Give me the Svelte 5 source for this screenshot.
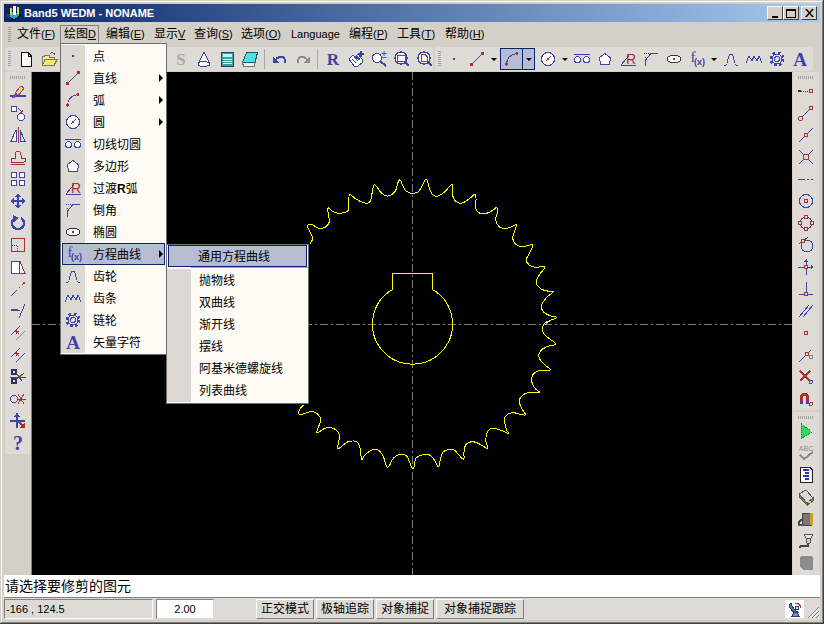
<script lang="ts">
  const B = '#3c46a8', R = '#a83232', G = '#8c8c8c';
  const ln = (a, b, c, d, col = B, w = 1) => `<line x1="${a}" y1="${b}" x2="${c}" y2="${d}" stroke="${col}" stroke-width="${w}"/>`;
  const dot = (x, y, r = 1.5, c = R) => `<circle cx="${x}" cy="${y}" r="${r}" fill="${c}"/>`;
  const ring = (x, y, r = 2, c = R) => `<circle cx="${x}" cy="${y}" r="${r}" fill="#dedbd6" stroke="${c}"/>`;
  const stroke = (d, c = B, w = 1) => `<path d="${d}" fill="none" stroke="${c}" stroke-width="${w}"/>`;
  const shape = (d, f, c = B) => `<path d="${d}" fill="${f}" stroke="${c}"/>`;
  const letter = (t, x, y, s, c, weight = 'bold', fam = 'Liberation Serif, serif') => `<text x="${x}" y="${y}" font-size="${s}" fill="${c}" text-anchor="middle" font-family="${fam}" font-weight="${weight}">${t}</text>`;
  const gearIcon = `<circle cx="8" cy="8" r="6" fill="none" stroke="${B}" stroke-width="3" stroke-dasharray="2.4 2.3"/><circle cx="8" cy="8" r="5" fill="#dedbd6" stroke="${B}"/><circle cx="8" cy="8" r="2.5" fill="none" stroke="${B}"/>`;

  const icons = {
    new: shape('M3.5 1.5H10L13.5 5V15.5H3.5Z', '#fff', '#111') + stroke('M10 1.5V5H13.5', '#111'),
    open: shape('M1.5 14.5V5.5H3L4 4.5H8V6.5H13V8', '#f4ec8c', '#777') + shape('M1.5 14.5L4 8.5H16L13 14.5Z', '#f4e870', '#887744') + stroke('M9 3Q12 0 14 4', '#555'),
    s: letter('S', 8, 14, 17, '#a8a8a8'),
    cone: shape('M8 1L2 13A6 2.5 0 0 0 14 13Z', '#fff') + stroke('M2 13A6 2.5 0 0 1 14 13'),
    calc: shape('M2.5 1.5H14.5V15.5H2.5Z', '#3f9f9f', '#303c90') + '<rect x="4" y="3" width="9" height="3" fill="#c8f0f0"/><rect x="4" y="8" width="9" height="1" fill="#e8f8f8"/><rect x="4" y="10" width="9" height="1" fill="#e8f8f8"/><rect x="4" y="12" width="9" height="1" fill="#e8f8f8"/>',
    eraser: shape('M4.5 1.5H15.5L13 11.5H0.5Z', '#50e0e8', '#2f5560') + shape('M0.5 11.5L1.5 15.5H12.5L13 11.5', '#eee', '#777'),
    undo: stroke('M4 8Q9 4 12 7Q14 10 12 12', B, 2) + `<path d="M1 5L7 12L1 12Z" fill="${B}"/>`,
    redo: stroke('M12 8Q7 4 4 7Q2 10 4 12', G, 2) + `<path d="M15 5L9 12L15 12Z" fill="${G}"/>`,
    r: letter('R', 8, 14, 17, B),
    hand: shape('M1 8L5 4L11 9L8 5L10 3L14 8V12L10 15H6Z', '#fff') + stroke('M4 8L8 12M6 6L10 10M9 5L12 9') + stroke('M10 3H16M13 0V6', B, 1.5),
    zoompm: `<circle cx="6" cy="7" r="4.5" fill="#fff" stroke="${B}" stroke-width="1.4"/>` + ln(9.5, 10.5, 15, 15, B, 2) + `<text x="13" y="7" font-size="10" text-anchor="middle" fill="${B}" font-family="Liberation Sans, sans-serif">±</text>`,
    zoomwin: `<circle cx="7" cy="7" r="6" fill="#fff" stroke="${B}" stroke-width="1.4"/><rect x="3.5" y="4.5" width="8" height="6" fill="none" stroke="${R}"/>` + ln(11, 11, 15, 15, B, 2),
    zoomdoc: `<circle cx="7" cy="7" r="6" fill="#fff" stroke="${B}" stroke-width="1.4"/>` + shape('M4.5 3.5H8L10 5.5V10.5H4.5Z', '#fff', R) + ln(11, 11, 15, 15, B, 2),
    point: dot(8, 8, 1.3, '#903040'),
    line: ln(2, 14, 14, 2) + dot(2.5, 13.5) + dot(13.5, 2.5),
    arc: stroke('M2.5 13Q3 4 13 2.5') + dot(2.5, 13, 1.8) + dot(13, 2.5),
    circle: `<circle cx="8" cy="8" r="6.5" fill="#fff" stroke="${B}"/>` + ln(6, 10, 11, 5, R) + dot(8, 8, 1),
    oo: ln(0, 3.5, 16, 3.5) + `<circle cx="3.5" cy="8.5" r="3" fill="#fff" stroke="${B}"/><circle cx="12.5" cy="8.5" r="3" fill="#fff" stroke="${B}"/>`,
    poly: shape('M8 2.5L14 7L12 13.5H4L2 7Z', '#fff'),
    fillet: stroke('M0.5 14.5L9 4.5M0.5 14.5H15.5') + letter('R', 11, 13, 14, R, 'normal', 'Liberation Sans, sans-serif'),
    chamfer: stroke('M2.5 15V9L8 2.5H15') + `<path d="M1 2.5H7M1.5 6H4" stroke="${B}" stroke-dasharray="1 1"/>`,
    ellipse: `<ellipse cx="8" cy="8" rx="7" ry="3.7" fill="#fff" stroke="#333"/>` + dot(8, 8, 1),
    fx: letter('f', 4, 11, 15, B, 'normal') + letter('(x)', 10.5, 14, 9, B, 'bold', 'Liberation Sans, sans-serif'),
    tooth: stroke('M1 14H3C5 14 4.500 3 8 3C11.500 3 11 14 13 14H15'),
    rack: stroke('M0 12L3 5L6 10L8 5L11 10L13 5L16 12'),
    gear: gearIcon,
    a: letter('A', 8, 15, 19, B),

    erase: `<path d="M5 10L11 3L14 5L9 12Z" fill="#e8dc50" stroke="#a040a0"/>` + ln(0, 13, 16, 13, B, 1.5) + ln(3, 15, 6, 11, '#a040a0', 2),
    movecopy: `<circle cx="4" cy="4" r="3" fill="#fff" stroke="${B}"/><circle cx="11" cy="12" r="3.500" fill="#fff" stroke="${B}"/>` + ln(8, 3, 12, 7, B) + ln(10, 7, 12, 7, R) + ln(12, 5, 12, 7, R),
    mirror: ln(8, 0, 8, 16, R) + shape('M6 3V14H1Z', '#fff') + shape('M10 3V14H15Z', '#dedbd6'),
    cloud: shape('M1.500 13V9H5V6Q5 2 8 2Q11 2 11 6V9H14C16 9 16 13 14 13Z', '#dedbd6', R) + ln(1, 15, 15, 15, R),
    array: '<g fill="#fff" stroke="' + B + '"><rect x="1.500" y="1.500" width="5" height="5"/><rect x="9.500" y="1.500" width="5" height="5"/><rect x="1.500" y="9.500" width="5" height="5"/><rect x="9.500" y="9.500" width="5" height="5"/></g>',
    move: ln(8, 1, 8, 15, B, 2) + ln(1, 8, 15, 8, B, 2) + `<path d="M8 0L11 4H5ZM8 16L11 12H5ZM0 8L4 5V11ZM16 8L12 5V11Z" fill="${B}"/>`,
    rotate: `<path d="M5 3A6 6 0 1 0 11 3" fill="none" stroke="${B}" stroke-width="2.500"/><path d="M3 0L9 3L4 7Z" fill="${B}"/>`,
    scale: shape('M1.500 1.500H14.500V14.500H1.500Z', 'none', R) + `<rect x="1.500" y="8.500" width="6" height="6" fill="none" stroke="${B}" stroke-dasharray="1 1"/>`,
    shear: shape('M1.500 2.500H10L15 14.500H1.500Z', '#fff', R) + shape('M1.500 2.500H9.500V14.500H1.500Z', 'none', B),
    extend: ln(1, 15, 6, 10) + `<line x1="6" y1="10" x2="14" y2="2" stroke="${R}" stroke-dasharray="2 2"/>` + dot(14, 2),
    trim: ln(1, 7, 8, 7, B, 2) + `<line x1="8" y1="7" x2="11" y2="7" stroke="${R}" stroke-dasharray="2 1"/>` + ln(9, 15, 15, 1),
    offset1: ln(1, 10, 10, 1) + ln(6, 15, 15, 6, G) + stroke('M5 5L9 9', R) + `<path d="M5 5L9 6L6 9Z" fill="${R}"/>`,
    offset2: ln(1, 10, 10, 1) + ln(6, 15, 15, 6) + stroke('M5 5L9 9', R) + `<path d="M5 5L9 6L6 9Z" fill="${R}"/>`,
    scissors: `<circle cx="4" cy="3" r="2.500" fill="none" stroke="#333060" stroke-width="2"/><circle cx="4" cy="12" r="2.500" fill="none" stroke="#333060" stroke-width="2"/>` + ln(6, 4, 12, 12, '#555') + ln(6, 11, 14, 4, R) + ln(0, 8, 16, 8, B),
    break: `<circle cx="4" cy="8" r="3.500" fill="none" stroke="${B}"/>` + ln(7, 8, 16, 8, B) + ln(8, 3, 14, 13, R) + ln(14, 3, 8, 13, R),
    stretch: ln(7, 0, 7, 15, B, 1.500) + ln(0, 8, 15, 8, B, 1.500) + `<path d="M7 0L10 4H4Z" fill="${B}"/>` + `<path d="M15 15L9 15L15 9Z" fill="${R}"/>` + ln(9, 9, 13, 13, R, 2),
    help: letter('?', 8, 15, 20, B),

    snapend: ln(0, 8, 3, 8, '#333', 1.500) + `<line x1="3" y1="8" x2="11" y2="8" stroke="#333" stroke-dasharray="1 1"/>` + ring(13, 8, 2),
    snapline: ln(3, 13, 13, 3) + ring(2.500, 13.500) + ring(13, 3),
    snapmid: ln(1, 15, 15, 1) + ring(8, 8),
    snapx: ln(1, 1, 15, 15) + ln(15, 1, 1, 15) + `<rect x="5.500" y="5.500" width="5" height="5" fill="#dedbd6" stroke="${R}"/>`,
    dash: ln(0, 8, 7, 8) + ln(9, 8, 11, 8) + ln(13, 8, 15, 8),
    snapcenter: `<circle cx="8" cy="8" r="6.500" fill="none" stroke="${B}"/>` + ring(8, 8),
    snapquad: `<circle cx="8" cy="8" r="6" fill="none" stroke="${B}"/>` + ring(8, 2) + ring(2, 8) + ring(14, 8) + ring(8, 14),
    snaptan: `<circle cx="9" cy="9" r="6" fill="none" stroke="${B}"/>` + ln(1, 7, 10, 0) + ring(5, 4),
    snapcross: ln(8, 0, 8, 16) + ln(0, 8, 15, 8) + ring(8, 8) + `<path d="M8 0L10 3H6ZM16 8L13 10V6Z" fill="${B}"/>`,
    snapperp: ln(8, 1, 8, 13) + ln(1, 13, 15, 13) + ring(8, 13),
    parallel: ln(1, 14, 11, 2) + ln(5, 14, 15, 2),
    snapnode: ring(8, 8),
    nearest: ln(1, 15, 13, 3) + ring(9, 7) + ring(13, 10, 2, '#888'),
    cancel: ln(2, 2, 12, 12, R, 2.500) + ln(12, 2, 2, 12, R, 2.500) + ring(13, 13, 1.500, B),
    magnet: `<path d="M2 12V6A4.500 4.500 0 0 1 11 6V12H8V6A1.500 1.500 0 0 0 5 6V12Z" fill="${R}"/><rect x="2" y="10" width="3" height="3" fill="${B}"/><rect x="8" y="10" width="3" height="3" fill="${B}"/>` + ring(13, 13, 1.500),
    play: '<path d="M3 0.500L14 9L3 15.500Z" fill="#30d860" stroke="#208030" stroke-dasharray="1 1"/>',
    abc: `<text x="8" y="6" font-size="7" fill="${G}" text-anchor="middle" font-family="Liberation Sans, sans-serif">ABC</text>` + stroke('M2 10L6 14L15 7', G, 2),
    doc: '<path d="M2.500 0.500H12L14.500 3V15.500H2.500Z" fill="#fff" stroke="#222"/>' + ln(5, 3, 11, 3, '#2a36b0', 2) + ln(7, 6, 11, 6, '#2a36b0', 2) + ln(5, 9, 11, 9, '#2a36b0', 2) + ln(7, 12, 11, 12, '#2a36b0', 2),
    printer: '<path d="M1 5L8 1L15 9L9 14Z" fill="#dcdcdc" stroke="#555"/><path d="M1 5V8L9 16V14Z" fill="#888" stroke="#555"/><path d="M9 14L15 9V12L9 16Z" fill="#4aa" stroke="#555"/><rect x="10" y="12" width="3" height="2" fill="#e0d040"/>',
    plotter: '<rect x="4" y="2" width="9" height="12" fill="#777" stroke="#444"/><rect x="12" y="2" width="3" height="12" fill="#c8a030"/><path d="M1 14Q0 9 5 9" fill="none" stroke="#444" stroke-width="2"/><rect x="0" y="13" width="7" height="2" fill="#555"/>',
    cable: '<path d="M6 1H15L13 5H8Z" fill="#e8e8d8" stroke="#555"/><path d="M8 5H13L12 10H9Z" fill="#ccc" stroke="#555"/>' + stroke('M10 10V13H3L1 15', '#444', 1.500),
    block: '<path d="M3 1H13L15 3V15H5L2 12V2Z" fill="#8c8c8c"/>'
  };

  const menus = [
    { zh: '文件', l: '(', u: 'F', r: ')', w: 44 },
    { zh: '绘图', l: '', u: 'D', r: '', w: 39, open: true },
    { zh: '编辑', l: '(', u: 'E', r: ')', w: 48 },
    { zh: '显示', l: '', u: 'V', r: '', w: 40 },
    { zh: '查询', l: '(', u: 'S', r: ')', w: 47 },
    { zh: '选项', l: '(', u: 'O', r: ')', w: 50 },
    { zh: '', l: 'Language', u: '', r: '', w: 58 },
    { zh: '编程', l: '(', u: 'P', r: ')', w: 48 },
    { zh: '工具', l: '(', u: 'T', r: ')', w: 48 },
    { zh: '帮助', l: '(', u: 'H', r: ')', w: 48 }
  ];

  const draw = [
    { icon: 'point', label: '点' },
    { icon: 'line', label: '直线', sub: true },
    { icon: 'arc', label: '弧', sub: true },
    { icon: 'circle', label: '圆', sub: true },
    { icon: 'oo', label: '切线切圆' },
    { icon: 'poly', label: '多边形' },
    { icon: 'fillet', label: '过渡', bold: 'R', tail: '弧' },
    { icon: 'chamfer', label: '倒角' },
    { icon: 'ellipse', label: '椭圆' },
    { icon: 'fx', label: '方程曲线', sub: true, active: true },
    { icon: 'tooth', label: '齿轮' },
    { icon: 'rack', label: '齿条' },
    { icon: 'gear', label: '链轮' },
    { icon: 'a', label: '矢量字符' }
  ];
  const curves = ['抛物线', '双曲线', '渐开线', '摆线', '阿基米德螺旋线', '列表曲线'];

  const leftTools = ['erase', 'movecopy', 'mirror', 'cloud', 'array', 'move', 'rotate', 'scale', 'shear', 'extend', 'trim', 'offset1', 'offset2', 'scissors', 'break', 'stretch', 'help'];
  const snapTools = ['snapend', 'snapline', 'snapmid', 'snapx', 'dash', 'snapcenter', 'snapquad', 'snaptan', 'snapcross', 'snapperp', 'parallel', 'snapnode', 'nearest', 'cancel', 'magnet'];
  const runTools = ['play', 'abc', 'doc', 'printer', 'plotter', 'cable', 'block'];
  const modes = [{ t: '正交模式', w: 58 }, { t: '极轴追踪', w: 58 }, { t: '对象捕捉', w: 58 }, { t: '对象捕捉跟踪', w: 88 }];

  // gear outline traced clockwise from the top root, in page pixels
  const top = [[367,72],[385,65],[395,50],[405,30],[412,32],[420,60],[430,76],[445,78],[465,65],[483,45],[488,50],[490,85],[505,98],[520,98],[540,85],[555,72],[558,85],[558,118],[570,130],[590,130],[610,120],[620,112],[623,125],[617,150],[630,172],[650,175],[665,170],[680,163],[675,180],[668,205],[680,225],[700,230],[728,224],[718,250],[708,270],[718,285],[735,292],[765,290],[750,312],[738,335],[745,350],[765,362],[790,365],[770,382],[755,405],[760,425],[780,437],[800,442],[780,452],[765,465]];
  const bottom = [[775,3],[760,15],[758,35],[770,50],[797,72],[770,80],[750,95],[748,115],[765,135],[781,150],[745,152],[728,165],[725,185],[735,205],[748,218],[715,218],[695,228],[688,245],[695,265],[705,285],[670,278],[650,285],[643,300],[650,330],[655,340],[630,330],[605,325],[590,340],[588,365],[592,385],[565,370],[545,365],[527,375],[522,395],[520,418],[495,392],[480,388],[460,395],[452,415],[445,440],[430,415],[415,403],[395,405],[378,415],[372,440],[367,445],[358,425],[350,408],[330,403],[310,415],[298,437],[290,440],[280,410],[265,390],[245,390],[225,405],[215,418],[210,385],[200,365],[175,365],[160,375],[143,385],[148,345],[130,325],[105,325],[80,338],[92,300],[80,280],[60,275],[30,285],[28,270],[40,255]];
  const rest = [[60,222],[68,205],[60,185],[52,168],[65,163],[85,175],[105,172],[118,155],[113,115],[130,125],[150,130],[175,120],[178,75],[195,85],[220,98],[240,95],[250,50],[258,48],[275,70],[295,78],[315,65],[325,35],[332,32],[345,60],[367,72]];

  // catmull-rom through the traced points
  function spline(pts) {
    let d = `M${pts[0][0]} ${pts[0][1]}`;
    for (let i = 0; i < pts.length - 1; i++) {
      const p0 = pts[Math.max(i - 1, 0)], p1 = pts[i], p2 = pts[i + 1], p3 = pts[Math.min(i + 2, pts.length - 1)];
      const c1 = [p1[0] + (p2[0] - p0[0]) / 6, p1[1] + (p2[1] - p0[1]) / 6];
      const c2 = [p2[0] - (p3[0] - p1[0]) / 6, p2[1] - (p3[1] - p1[1]) / 6];
      d += `C${c1[0].toFixed(1)} ${c1[1].toFixed(1)} ${c2[0].toFixed(1)} ${c2[1].toFixed(1)} ${p2[0].toFixed(1)} ${p2[1].toFixed(1)}`;
    }
    return d;
  }
  // the stretch behind the submenu is left out, so the two runs stay apart
  const outline = spline([
    ...top.map(([x, y]) => [290 + x / 3, 170 + y / 3]),
    ...bottom.map(([x, y]) => [290 + x / 3, 320 + y / 3])
  ]) + spline(rest.map(([x, y]) => [290 + x / 3, 170 + y / 3]));
</script>

{#snippet icon(name)}
  <svg class="ico" width="16" height="16" viewBox="0 0 16 16" shape-rendering="crispEdges">{@html icons[name]}</svg>
{/snippet}

{#snippet tool(name)}
  <span class="tool">{@render icon(name)}</span>
{/snippet}

{#snippet drop()}
  <span class="drop"><i></i></span>
{/snippet}

<div class="window">
  <header class="title">
    <svg class="appicon" width="16" height="16" viewBox="0 0 16 16" shape-rendering="crispEdges">
      <path d="M1 10L8 6L15 10L8 15Z" fill="#20b0c0" stroke="#000" />
      <rect x="4" y="3" width="2" height="7" fill="#e8d040" />
      <rect x="7" y="1" width="3" height="9" fill="#fff" />
      <rect x="11" y="2" width="2" height="7" fill="#e8d040" />
      <rect x="1" y="9" width="3" height="3" fill="#602080" />
    </svg>
    <span class="name">Band5 WEDM - NONAME</span>
    <div class="caption">
      <button aria-label="minimize"><svg width="9" height="9" viewBox="0 0 9 9"><rect x="1" y="7" width="6" height="2" /></svg></button>
      <button aria-label="maximize"><svg width="10" height="9" viewBox="0 0 10 9"><path d="M0 0H10V9H0ZM1 2V8H9V2Z" fill-rule="evenodd" /></svg></button>
      <button class="close" aria-label="close"><svg width="9" height="8" viewBox="0 0 9 8"><path d="M0 0H2L4.500 3L7 0H9L5.500 4L9 8H7L4.500 5L2 8H0L3.500 4Z" /></svg></button>
    </div>
  </header>

  <nav class="menubar">
    <span class="grip-v"></span>
    {#each menus as m}
      <span class="menu" class:open={m.open} style="width:{m.w}px"><span class="zh">{m.zh}</span>{m.l}{#if m.u}<u>{m.u}</u>{/if}{m.r}</span>
    {/each}
  </nav>

  <div class="toolrow">
    <div class="band one">
      <span class="grip-v"></span>
      {@render tool('new')}
      {@render tool('open')}
      <span class="hidden-tools"></span>
      {@render tool('s')}
      {@render tool('cone')}
      {@render tool('calc')}
      {@render tool('eraser')}
      <span class="sep"></span>
      {@render tool('undo')}
      {@render tool('redo')}
      <span class="sep"></span>
      {@render tool('r')}
      {@render tool('hand')}
      {@render tool('zoompm')}
      {@render tool('zoomwin')}
      {@render tool('zoomdoc')}
    </div>
    <div class="band two">
      <span class="grip-v"></span>
      {@render tool('point')}
      {@render tool('line')}
      {@render drop()}
      <span class="selected">
        <span class="tool narrow">{@render icon('arc')}</span>
        <span class="drop"><i></i></span>
      </span>
      {@render tool('circle')}
      {@render drop()}
      {@render tool('oo')}
      {@render tool('poly')}
      {@render tool('fillet')}
      {@render tool('chamfer')}
      {@render tool('ellipse')}
      {@render tool('fx')}
      {@render drop()}
      {@render tool('tooth')}
      {@render tool('rack')}
      {@render tool('gear')}
      {@render tool('a')}
    </div>
  </div>

  <main class="work">
    <aside class="dock left">
      <div class="vbar">
        <span class="grip-h"></span>
        {#each leftTools as t}{@render tool(t)}{/each}
      </div>
    </aside>

    <svg class="canvas" width="760" height="503" viewBox="32 72 760 503" shape-rendering="crispEdges">
      <line x1="32" y1="324.500" x2="792" y2="324.500" stroke="#808080" stroke-dasharray="8 3 2 3" />
      <line x1="412.500" y1="72" x2="412.500" y2="575" stroke="#808080" stroke-dasharray="8 3 2 3" />
      <path d={outline} fill="none" stroke="#ffff00" />
      <path d="M392.500 289.500V273.500H432.500V289.500A40 40 0 1 1 392.500 289.500Z" fill="none" stroke="#ffff00" />
    </svg>

    <aside class="dock right">
      <div class="vbar">
        <span class="grip-h"></span>
        {#each snapTools as t}{@render tool(t)}{/each}
      </div>
      <div class="vbar second">
        <span class="grip-h"></span>
        {#each runTools as t}{@render tool(t)}{/each}
      </div>
    </aside>
  </main>

  <div class="prompt">请选择要修剪的图元</div>

  <footer class="status">
    <span class="coords">-166 , 124.5</span>
    <span class="scale">2.00</span>
    <div class="modes">
      {#each modes as m}
        <span class="mode" style="width:{m.w}px">{m.t}</span>
      {/each}
    </div>
    <span class="dish">
      <svg width="16" height="16" viewBox="0 0 16 16" shape-rendering="crispEdges">
        <path d="M2 4Q4 12 12 12Q6 9 4 2Z" fill="#5a76b8" stroke="#2a3a70" />
        <path d="M7 11L5 15H12L10 11Z" fill="#7a8ab8" stroke="#2a3a70" />
        <path d="M8 2Q13 2 14 7" fill="none" stroke="#c03030" />
        <rect x="8" y="5" width="3" height="3" fill="#e8e8e8" stroke="#2a3a70" />
      </svg>
    </span>
    <svg class="sizer" width="13" height="13" viewBox="0 0 13 13">
      <path d="M12 1L1 12M12 5L5 12M12 9L9 12" stroke="#808080" fill="none" />
      <path d="M12 2.500L2.500 12M12 6.500L6.500 12M12 10.500L10.500 12" stroke="#fff" fill="none" />
    </svg>
  </footer>

  <div class="popup draw">
    {#each draw as item}
      <div class="row" class:active={item.active}>
        <span class="gutter">{@render icon(item.icon)}</span>
        <span class="text">{item.label}{#if item.bold}<b>{item.bold}</b>{item.tail}{/if}</span>
        {#if item.sub}<i class="more"></i>{/if}
      </div>
    {/each}
  </div>

  <div class="popup curves">
    <div class="row active head"><span class="text">通用方程曲线</span></div>
    <div class="rule"></div>
    {#each curves as c}
      <div class="row">
        <span class="gutter"></span>
        <span class="text">{c}</span>
      </div>
    {/each}
  </div>
</div>

<style>
  :global(body) { margin: 0; background: #d4d0c8; }
  .window {
    position: relative; box-sizing: border-box; width: 824px; height: 624px; padding: 4px;
    display: flex; flex-direction: column; overflow: hidden; background: #d4d0c8;
    box-shadow: inset -1px -1px 0 #404040, inset 1px 1px 0 #d4d0c8, inset -2px -2px 0 #808080, inset 2px 2px 0 #fff;
    font: 11px "Liberation Sans", "Noto Sans CJK SC", sans-serif; color: #000;
  }
  .title {
    height: 18px; flex: none; display: flex; align-items: center; padding: 0 3px 0 2px;
    background: linear-gradient(90deg, #0a246a, #a6caf0); color: #fff;
  }
  .appicon { flex: none; }
  .name { margin-left: 2px; font-weight: 700; font-size: 11px; white-space: nowrap; }
  .caption { margin-left: auto; display: flex; }
  .caption button {
    box-sizing: border-box; width: 16px; height: 14px; padding: 0; display: flex; align-items: center; justify-content: center;
    background: #d4d0c8; border: 1px solid; border-color: #fff #404040 #404040 #fff;
  }
  .caption .close { margin-left: 2px; }
  .menubar { height: 25px; flex: none; display: flex; align-items: center; padding-left: 3px; box-sizing: border-box; }
  .menubar .grip-v { margin: 0 5px 0 1px; }
  .menu { box-sizing: border-box; height: 19px; line-height: 17px; text-align: left; white-space: nowrap; flex: none; border: 1px solid transparent; }
  .menu .zh { font-size: 12px; }
  .menu.open { border-color: #808080; border-bottom: none; padding-left: 3px; margin-right: 6px; }
  .grip-v {
    flex: none; width: 3px; height: 16px;
    background: repeating-linear-gradient(180deg, #a0a0a0 0 1px, transparent 1px 2px);
  }
  .grip-h {
    display: block; width: 16px; height: 3px; margin: 0 auto;
    background: repeating-linear-gradient(90deg, #a0a0a0 0 1px, transparent 1px 2px);
  }
  .toolrow { height: 25px; flex: none; display: flex; padding-left: 1px; box-sizing: border-box; }
  .band { height: 24px; display: flex; align-items: center; background: #dedbd6; border-radius: 3px; box-sizing: border-box; }
  .band.one { width: 428px; padding-left: 3px; }
  .band.one .grip-v { margin-right: 3px; }
  .band.two { width: 378px; margin-left: 2px; padding-left: 3px; }
  .band.two .grip-v { margin-right: 1px; }
  .tool { flex: none; width: 23px; height: 22px; display: flex; align-items: center; justify-content: center; }
  .ico { display: block; overflow: visible; }
  .hidden-tools { flex: none; width: 109px; }
  .sep { flex: none; width: 1px; height: 20px; margin: 0 3px; background: #a8a8a8; }
  .sep:last-of-type { margin: 0 2px; }
  .drop { flex: none; width: 11px; height: 22px; display: flex; align-items: center; justify-content: center; }
  .drop i { width: 0; height: 0; border: 3px solid transparent; border-top: 3px solid #000; border-bottom: none; }
  .selected { flex: none; display: flex; width: 35px; height: 22px; box-sizing: border-box; margin: 0 1px; background: #b6bdd2; border: 1px solid #0a246a; }
  .selected .narrow { width: 21px; height: 20px; border-right: 1px solid #0a246a; }
  .selected .drop { width: 12px; height: 20px; }
  .work { flex: 1; min-height: 0; display: flex; }
  .dock { flex: none; box-sizing: border-box; display: flex; flex-direction: column; }
  .dock.left { width: 28px; padding-left: 1px; border-right: 1px solid #808080; }
  .dock.right { width: 28px; padding-left: 1px; }
  .vbar { width: 26px; box-sizing: border-box; padding-top: 4px; display: flex; flex-direction: column; align-items: center; background: #dedbd6; border-radius: 3px; }
  .vbar .grip-h { margin-bottom: 1px; }
  .vbar .tool { height: 22px; }
  .dock.right .vbar { height: 338px; }
  .dock.right .second { height: 163px; margin-top: 2px; }
  .canvas { display: block; flex: none; background: #000; }
  .prompt { flex: none; height: 23px; box-sizing: border-box; line-height: 22px; padding-left: 1px; background: #fff; border-bottom: 1px solid #808080; font-size: 14px; }
  .status { flex: none; height: 22px; display: flex; align-items: center; background: #dedbd6; }
  .coords { box-sizing: border-box; width: 149px; height: 20px; line-height: 19px; padding-left: 1px; flex: none; border: 1px solid #a0a0a0; border-color: #808080 #fff #fff #808080; }
  .scale { box-sizing: border-box; width: 58px; height: 20px; line-height: 19px; margin-left: 3px; flex: none; text-align: center; background: #fff; border: 1px solid #dedbd6; border-top-color: #808080; border-left-color: #808080; }
  .modes { display: flex; gap: 2px; margin-left: 42px; }
  .mode { box-sizing: border-box; height: 20px; line-height: 18px; text-align: center; flex: none; border: 1px solid; border-color: #fff #808080 #808080 #fff; font-size: 12px; }
  .dish { margin-left: auto; box-sizing: border-box; width: 19px; height: 18px; display: flex; align-items: center; justify-content: center; background: #fff; }
  .sizer { flex: none; margin: 7px 0 0 3px; }
  .popup { position: absolute; box-sizing: border-box; background: #fefbf5; border: 1px solid #6e6e6e; }
  .draw { left: 60px; top: 43px; width: 107px; height: 312px; padding-top: 1px; }
  .curves { left: 166px; top: 244px; width: 143px; height: 160px; }
  .row { position: relative; height: 22px; display: flex; align-items: center; box-sizing: border-box; }
  .gutter { flex: none; width: 24px; height: 22px; display: flex; align-items: center; justify-content: center; background: #dcd9d4; }
  .text { padding: 0 0 2px 8px; white-space: nowrap; font-size: 12px; }
  .text b { font-weight: 700; }
  .row.active { background: #b6bdd2; outline: 1px solid #0a246a; outline-offset: -1px; margin: 0 1px; }
  .row.active .gutter { background: transparent; width: 23px; }
  .more { position: absolute; right: 3px; top: 7px; width: 0; height: 0; border: 4px solid transparent; border-left: 4px solid #000; border-right: none; }
  .row.active .more { right: 2px; }
  .head { margin: 0; height: 22px; }
  .head .text { padding-left: 30px; }
  .rule { height: 2px; margin-left: 24px; background: #fefbf5; border-top: 1px solid #a8a8a8; box-sizing: border-box; }
  .curves .row:last-child { height: 23px; }
  .curves .row:last-child .gutter { height: 23px; }
</style>
